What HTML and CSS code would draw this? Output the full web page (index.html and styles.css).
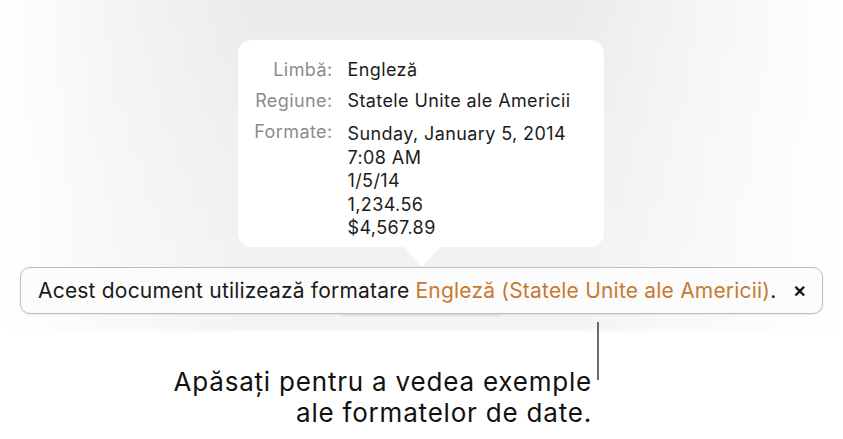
FILE: index.html
```html
<!DOCTYPE html>
<html lang="en">
<head>
    <meta charset="UTF-8">
    <title>format popover</title>
    <link rel="stylesheet" href="styles.css">
</head>
<body>
  <!-- Document area with the format popover -->
  <section class="stage">
    <div class="popover">
      <div class="popover-grid">
        <span class="label">Limbă:</span>
        <span class="value">Engleză</span>
        <span class="label">Regiune:</span>
        <span class="value">Statele Unite ale Americii</span>
        <span class="label">Formate:</span>
        <span class="value formats">Sunday, January 5, 2014<br>7:08 AM<br>1/5/14<br>1,234.56<br>$4,567.89</span>
      </div>
    </div>
    <div class="banner">
      <p class="banner-text">Acest document utilizează formatare <span class="accent">Engleză (Statele Unite ale Americii)</span>.</p>
      <span class="close">&#x2715;</span>
    </div>
  </section>

  <!-- Callout -->
  <section class="note">
    <p class="note-text">Apăsați pentru a vedea exemple<br>ale formatelor de date.</p>
    <span class="note-line"></span>
  </section>
</body>
</html>
```

FILE: styles.css
```css
* {
  box-sizing: border-box;
  margin: 0;
  padding: 0;
}

body {
  font-family: Inter, Roboto, "Liberation Sans", sans-serif;
  color: #1c1c1c;
  background-color: #fff;
  width: 843px;
  height: 439px;
  overflow: hidden;
}

/* Stage */

.stage {
  position: relative;
  height: 333px;
  padding-top: 40px;
  display: flex;
  flex-direction: column;
  align-items: center;
  background:
    linear-gradient(to bottom, rgba(255, 255, 255, 0) 0%, rgba(255, 255, 255, 0.45) 100%),
    linear-gradient(to right, #fff 0%, #f4f4f4 14%, #ebebeb 30%, #ebebeb 68%, #f6f6f6 84%, #fff 100%);
}

.stage::after {
  content: "";
  position: absolute;
  left: 0;
  right: 0;
  bottom: 0;
  height: 5px;
  background: linear-gradient(to bottom, rgba(255, 255, 255, 0), #fff);
}

/* Popover */

.popover {
  position: relative;
  width: 366px;
  height: 207px;
  margin-left: -2px;
  padding: 18px 0 0 0;
  background-color: #fff;
  border-radius: 14px;
}

.popover::after {
  content: "";
  position: absolute;
  left: 165px;
  bottom: -20px;
  border-left: 19px solid transparent;
  border-right: 19px solid transparent;
  border-top: 21px solid #fff;
}

.popover-grid {
  display: grid;
  grid-template-columns: 95px auto;
  column-gap: 15px;
  row-gap: 8px;
  font-size: 18px;
  line-height: 23px;
  letter-spacing: 0.4px;
}

.label {
  text-align: right;
  color: #8c8c8c;
}

.value {
  color: #1c1c1c;
}

.formats {
  margin-top: 2px;
  line-height: 23.5px;
}

/* Banner */

.banner {
  position: relative;
  z-index: 1;
  width: 803px;
  height: 47px;
  margin-top: 20px;
  padding: 0 16px 0 17px;
  display: flex;
  align-items: center;
  justify-content: space-between;
  background-color: #fcfcfc;
  border: 1px solid #bdbdbd;
  border-radius: 10px;
  box-shadow: 0 1px 2px rgba(0, 0, 0, 0.08);
}

.banner::before {
  content: "";
  position: absolute;
  left: 320px;
  bottom: -4px;
  width: 160px;
  height: 3px;
  border-radius: 0 0 8px 8px;
  background-color: rgba(0, 0, 0, 0.04);
}

.banner-text {
  font-size: 21px;
  letter-spacing: 0.2px;
  color: #1a1a1a;
}

.accent {
  color: #c77a30;
}

.close {
  font-size: 16px;
  font-weight: bold;
  color: #111;
}

/* Callout */

.note {
  position: relative;
  display: flex;
  align-items: flex-start;
  justify-content: flex-end;
  margin-top: -11px;
  padding-right: 244px;
}

.note-text {
  margin-top: 44px;
  margin-right: 5px;
  font-size: 26px;
  line-height: 31px;
  letter-spacing: 0.8px;
  text-align: right;
  color: #111;
}

.note-line {
  width: 2px;
  height: 58px;
  background-color: #6a6a6a;
}
```
